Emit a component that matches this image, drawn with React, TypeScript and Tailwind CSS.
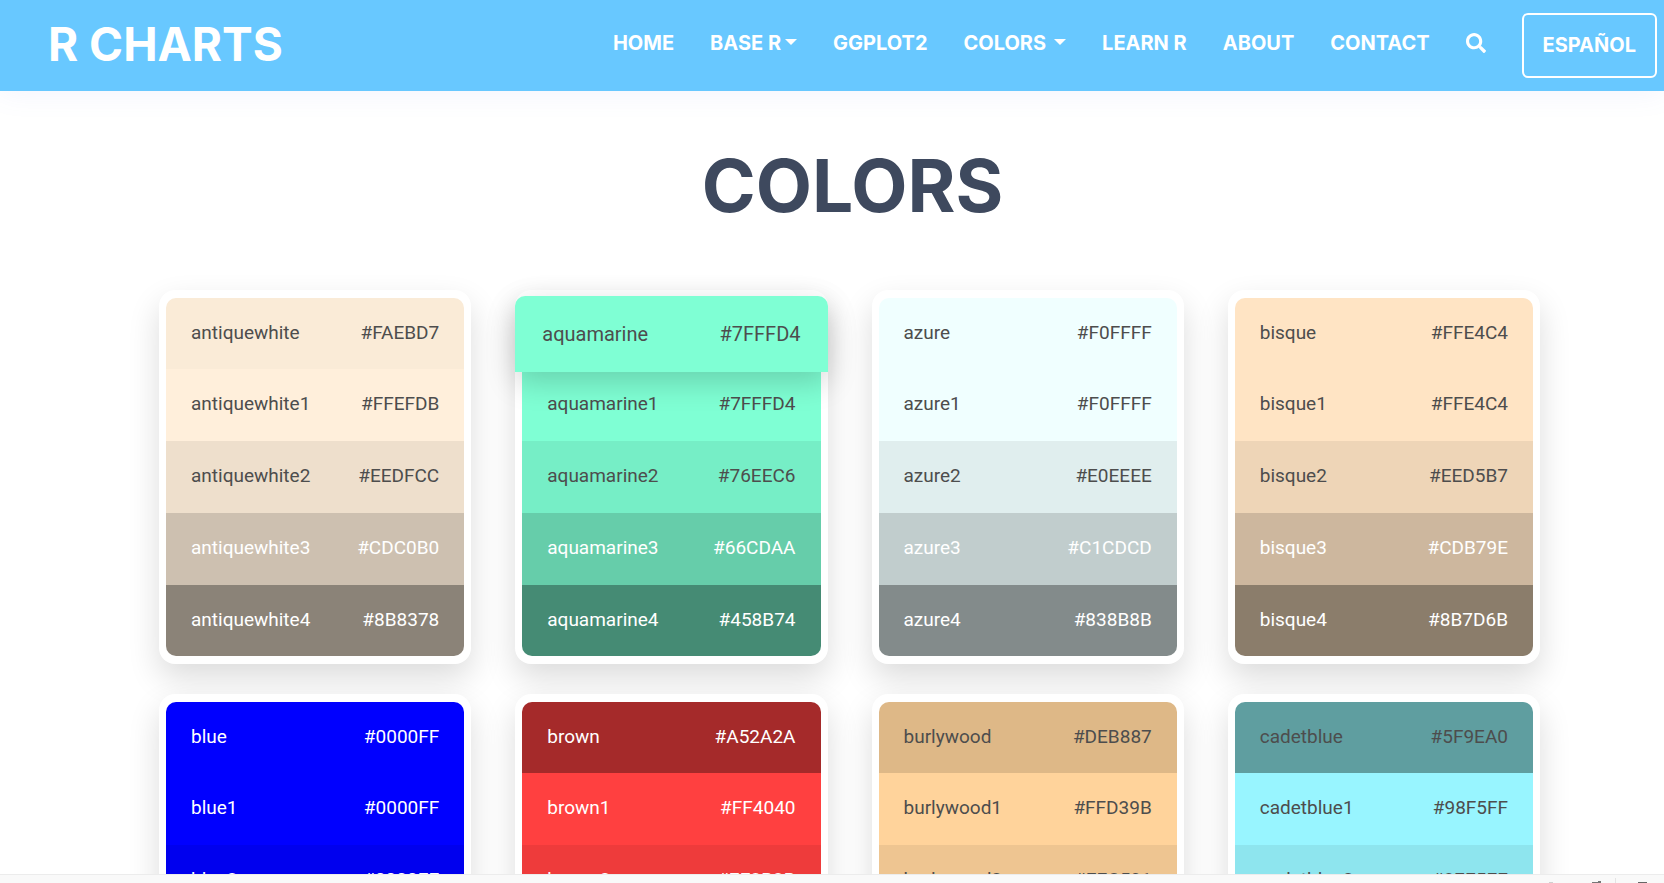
import { FaSearch } from "react-icons/fa";

type Shade = { hex: string; light?: boolean };
type Family = { name: string; shades: Shade[] };

const family = (name: string, hexes: string[], lightFrom: number): Family => ({
  name,
  shades: hexes.map((hex, i) => ({ hex, light: i >= lightFrom })),
});

const families: Family[] = [
  family("antiquewhite", ["#FAEBD7", "#FFEFDB", "#EEDFCC", "#CDC0B0", "#8B8378"], 3),
  family("aquamarine", ["#7FFFD4", "#7FFFD4", "#76EEC6", "#66CDAA", "#458B74"], 3),
  family("azure", ["#F0FFFF", "#F0FFFF", "#E0EEEE", "#C1CDCD", "#838B8B"], 3),
  family("bisque", ["#FFE4C4", "#FFE4C4", "#EED5B7", "#CDB79E", "#8B7D6B"], 3),
  family("blue", ["#0000FF", "#0000FF", "#0000EE", "#0000CD", "#00008B"], 0),
  family("brown", ["#A52A2A", "#FF4040", "#EE3B3B", "#CD3333", "#8B2323"], 0),
  family("burlywood", ["#DEB887", "#FFD39B", "#EEC591", "#CDAA7D", "#8B7355"], 3),
  family("cadetblue", ["#5F9EA0", "#98F5FF", "#8EE5EE", "#7AC5CD", "#53868B"], 3),
];

const raised = "aquamarine";

const navItems = [
  { label: "HOME" },
  { label: "BASE R", menu: "ml-1" },
  { label: "GGPLOT2" },
  { label: "COLORS", menu: "ml-2" },
  { label: "LEARN R" },
  { label: "ABOUT" },
  { label: "CONTACT" },
];

function Header() {
  return (
    <header className="relative z-10 flex h-[91px] shrink-0 items-start justify-between bg-[#68c8ff] pl-12 pr-[7px] font-['Inter',sans-serif] font-bold text-white shadow-[0_0_30px_rgba(120,130,240,0.1)]">
      <a href="#home" className="pt-3.5 text-[46px] leading-[60px]">
        R CHARTS
      </a>
      <nav className="flex items-start whitespace-nowrap text-xl leading-6">
        <ul className="flex gap-9 pt-[31px]">
          {navItems.map((item) => (
            <li key={item.label}>
              <a href="#nav" className="flex items-center">
                {item.label}
                {item.menu && (
                  <span
                    className={`${item.menu} -mt-0.5 border-x-[6px] border-t-[6px] border-x-transparent border-t-white`}
                  />
                )}
              </a>
            </li>
          ))}
        </ul>
        <button type="button" aria-label="Search" className="ml-9 mt-[33px]">
          <FaSearch className="size-5" />
        </button>
        <a
          href="#es"
          className="ml-9 mt-[13px] rounded-md border-2 border-white px-[19px] pb-[19px] pt-[18px] leading-6"
        >
          ESPAÑOL
        </a>
      </nav>
    </header>
  );
}

function Row({ name, shade }: { name: string; shade: Shade }) {
  const tone = shade.light ? "text-white" : "text-[#4d4d4d]";
  const size =
    name === raised
      ? "relative z-10 -mx-[7px] -mb-[3px] -mt-0.5 h-[76px] rounded-t-[10px] px-[27px] text-[20px] shadow-[0_10px_30px_rgba(0,0,0,0.18)]"
      : "h-[72px] px-[25px] text-[19px] first:h-[71px] first:rounded-t-[10px] last:h-[71px] last:rounded-b-[10px]";
  return (
    <li
      className={`flex items-center justify-between pb-px ${size} ${tone}`}
      style={{ backgroundColor: shade.hex }}
    >
      <span>{name}</span>
      <span>{shade.hex}</span>
    </li>
  );
}

function Card({ name, shades }: Family) {
  return (
    <ul className="rounded-2xl bg-white px-[7px] py-2 shadow-[0_14px_32px_rgba(0,0,0,0.14)]">
      {shades.map((shade, i) => (
        <Row key={i} name={i === 0 ? name : `${name}${i}`} shade={shade} />
      ))}
    </ul>
  );
}

function StatusBar() {
  return (
    <footer className="relative z-20 h-[9px] shrink-0 overflow-hidden border-t border-[#ececec] bg-[#f9f9f9]">
      <svg className="ml-auto block" width="130" height="8" viewBox="0 0 130 8">
        <path d="M15 7h4v1h-4z" fill="#d0d0d0" />
        <path d="M58 7h9v1h-9zM64 6h3v1h-3z" fill="#777" />
        <path d="M81 3h1v5h-1z" fill="#e4e4e4" />
        <path d="M104 7h9v1h-9z" fill="#666" />
      </svg>
    </footer>
  );
}

export default function App() {
  return (
    <div className="flex h-screen flex-col overflow-hidden bg-white font-['Roboto',sans-serif]">
      <Header />
      <main className="min-h-0 flex-1 overflow-hidden pl-[159px] pr-[124px]">
        <h1 className="pb-[59px] pl-1.5 pt-[50px] text-center font-['Inter',sans-serif] text-[73px] font-bold leading-[90px] text-[#3e495e]">
          COLORS
        </h1>
        <div className="grid grid-cols-4 gap-x-11 gap-y-[30px]">
          {families.map((f) => (
            <Card key={f.name} {...f} />
          ))}
        </div>
      </main>
      <StatusBar />
    </div>
  );
}
